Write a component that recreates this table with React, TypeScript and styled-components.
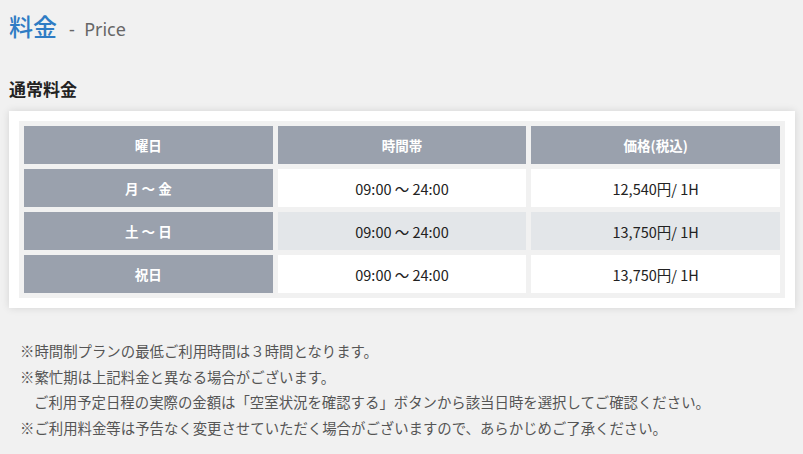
import React from "react";
import styled, { createGlobalStyle } from "styled-components";

const Global = createGlobalStyle`
  html, body { margin: 0; padding: 0; background: #f1f1f1; }
  body { font-family: "Noto Sans", "Noto Sans CJK JP", sans-serif; color: #333; }
`;

const Page = styled.div`
  padding: 7px 8px 0 9px;
  width: 803px;
  box-sizing: border-box;
`;

const Title = styled.h1`
  margin: 0;
  display: flex;
  align-items: baseline;
  gap: 12px;
  font-weight: 400;
  line-height: 38px;
`;

const TitleMain = styled.span`
  font-size: 24px;
  font-weight: 500;
  color: #2f7cc4;
  font-family: "Noto Sans CJK JP", sans-serif;
`;

const TitleSub = styled.span`
  font-size: 18px;
  color: #666;
`;

const Section = styled.h2`
  margin: 29px 0 0;
  font-size: 17px;
  font-weight: 700;
  color: #222;
  line-height: 24px;
  font-family: "Noto Sans CJK JP", sans-serif;
`;

const Card = styled.div`
  margin-top: 10px;
  background: #fff;
  padding: 10px;
  box-shadow: 0 0 8px rgba(0, 0, 0, 0.12);
  width: 786px;
  box-sizing: border-box;
`;

const Table = styled.table`
  width: 100%;
  background: #f1f1f1;
  border-collapse: separate;
  border-spacing: 5px;
  table-layout: fixed;
  font-family: "Noto Sans CJK JP", sans-serif;
`;

const Th = styled.th`
  background: #9aa1ad;
  color: #fff;
  font-size: 13.5px;
  font-weight: 700;
  height: 38px;
  padding: 0;
  text-align: center;
`;

const Td = styled.td<{ $alt?: boolean }>`
  background: ${(p) => (p.$alt ? "#e3e6e9" : "#fff")};
  color: #222;
  font-size: 14.5px;
  height: 38px;
  padding: 0;
  text-align: center;
`;

const Notes = styled.ul`
  list-style: none;
  margin: 30px 0 0;
  padding: 0 0 0 11px;
  font-size: 14.4px;
  line-height: 25.5px;
  color: #555;
  font-family: "Noto Sans CJK JP", sans-serif;
`;

const Note = styled.li<{ $indent?: boolean }>`
  padding-left: ${(p) => (p.$indent ? "14px" : "0")};
`;

const rows = [
  { day: "月 〜 金", time: "09:00 〜 24:00", price: "12,540円/ 1H" },
  { day: "土 〜 日", time: "09:00 〜 24:00", price: "13,750円/ 1H" },
  { day: "祝日", time: "09:00 〜 24:00", price: "13,750円/ 1H" },
];

export default function App() {
  return (
    <>
      <Global />
      <Page>
        <Title>
          <TitleMain>料金</TitleMain>
          <TitleSub>-&nbsp; Price</TitleSub>
        </Title>
        <Section>通常料金</Section>
        <Card>
          <Table>
            <thead>
              <tr>
                <Th>曜日</Th>
                <Th>時間帯</Th>
                <Th>価格(税込)</Th>
              </tr>
            </thead>
            <tbody>
              {rows.map((r, i) => (
                <tr key={i}>
                  <Th>{r.day}</Th>
                  <Td $alt={i === 1}>{r.time}</Td>
                  <Td $alt={i === 1}>{r.price}</Td>
                </tr>
              ))}
            </tbody>
          </Table>
        </Card>
        <Notes>
          <Note>※時間制プランの最低ご利用時間は３時間となります。</Note>
          <Note>※繁忙期は上記料金と異なる場合がございます。</Note>
          <Note $indent>ご利用予定日程の実際の金額は「空室状況を確認する」ボタンから該当日時を選択してご確認ください。</Note>
          <Note>※ご利用料金等は予告なく変更させていただく場合がございますので、あらかじめご了承ください。</Note>
        </Notes>
      </Page>
    </>
  );
}
